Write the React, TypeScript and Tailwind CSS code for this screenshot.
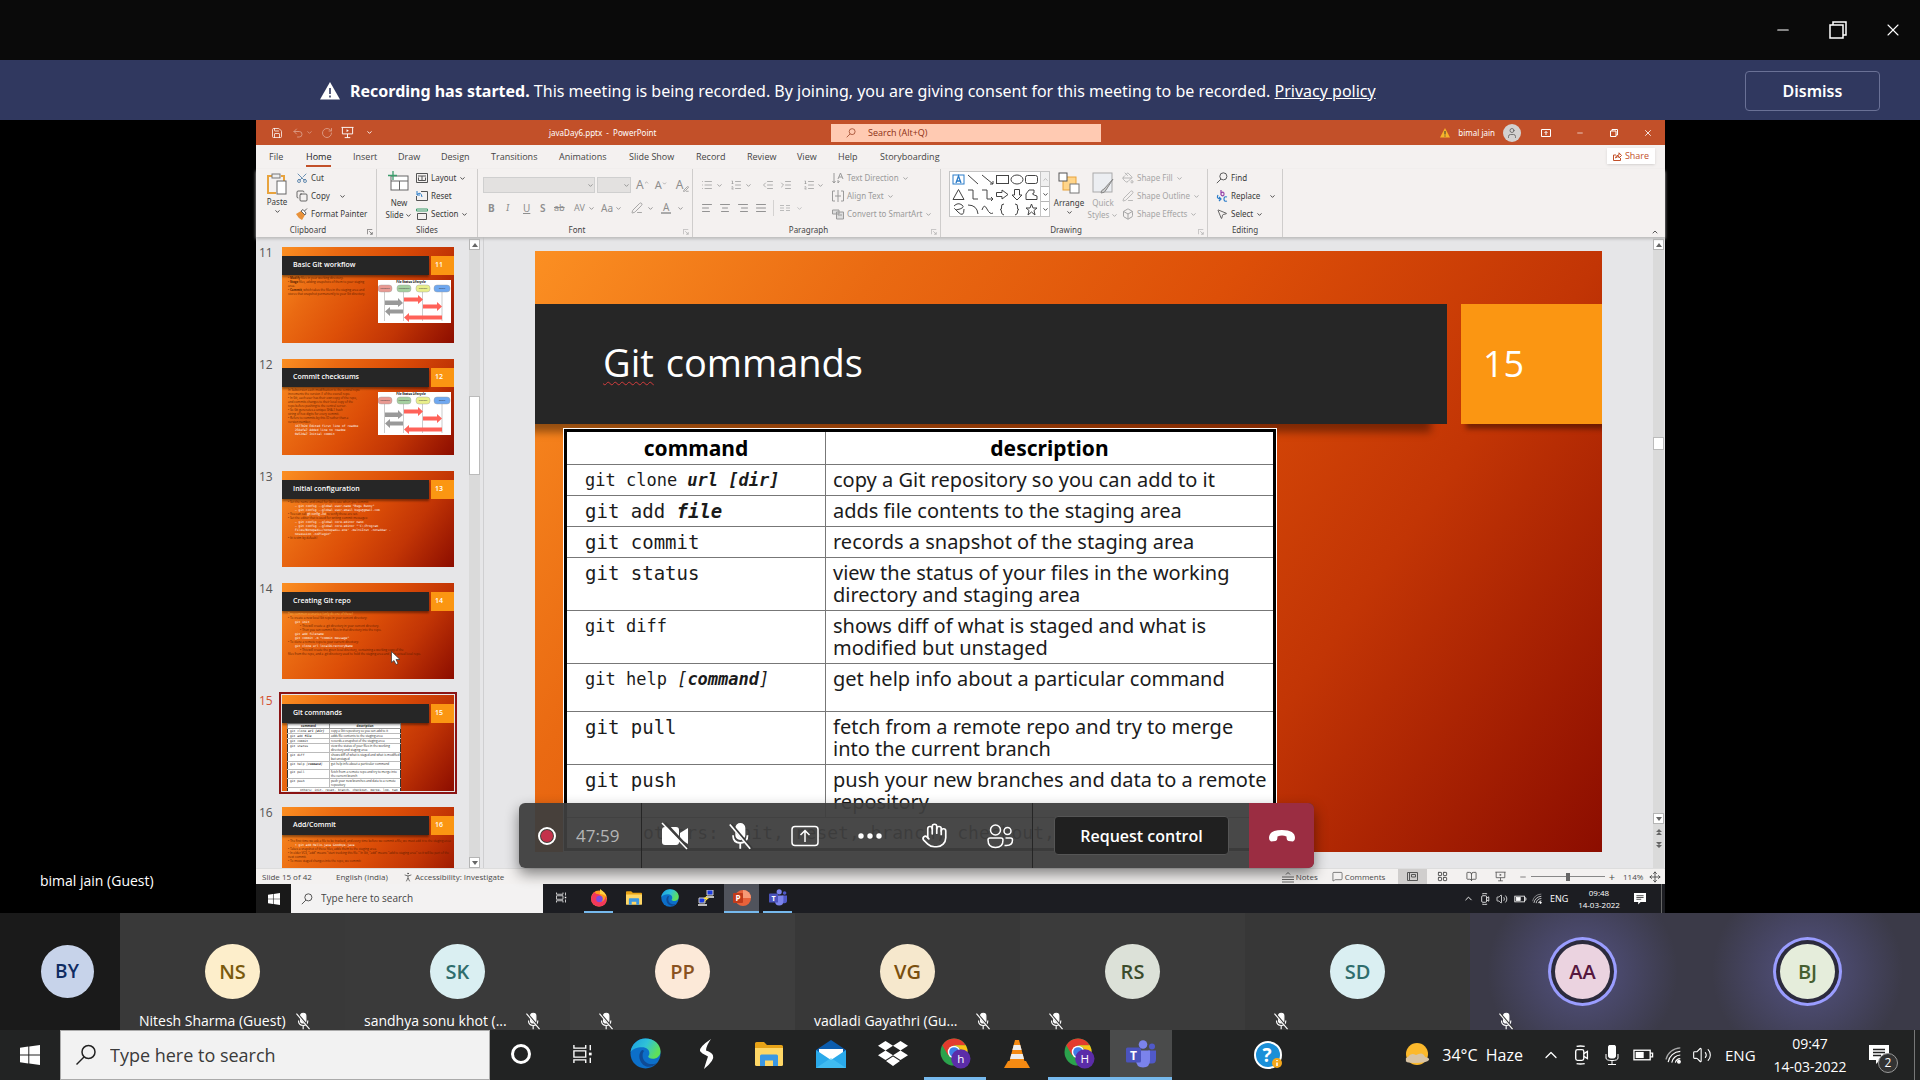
import React from 'react';
import {
  Save, Undo2, RotateCw, Scissors, Copy, List, ListOrdered, IndentDecrease, IndentIncrease,
  TextAlignStart, TextAlignCenter, TextAlignEnd, TextAlignJustify, ChevronDown, ChevronUp, Search, MousePointer2, PaintBucket,
  PenLine, Box, Minus, X, User, BookOpen, LayoutGrid, MessageSquare, Volume2, Hand, PersonStanding, Move,
} from 'lucide-react';

type P = { className?: string };

const Chev = ({ className = '' }: P) => <ChevronDown className={'size-[7px] shrink-0 ' + className} strokeWidth={3} />;

const WinLogo = ({ className = '' }: P) => (
  <svg viewBox="0 0 20 20" className={className} fill="#fff">
    <path d="M0 2.8 8.3 1.6V9.5H0ZM9.3 1.5 20 0V9.5H9.3ZM0 10.5H8.3V18.4L0 17.2ZM9.3 10.5H20V20L9.3 18.5Z" />
  </svg>
);
const Lens = ({ className = '' }: P) => (
  <svg viewBox="0 0 22 22" className={className} fill="none" stroke="currentColor" strokeWidth="1.500"><circle cx="13.500" cy="8" r="6.500" /><path d="M9 13 1.500 20.500" /></svg>
);
const Screen = ({ className = '' }: P) => (
  <svg viewBox="0 0 14 14" className={className} fill="none" stroke="currentColor"><path d="M.5 1.500H13.500M1.500 1.500V8.500H12.500V1.500M7 8.500V12.500M4 12.500H10" /><path d="M6 3.500V6.500L8.500 5Z" fill="currentColor" stroke="none" /></svg>
);
const Edge = ({ className = '' }: P) => (
  <svg viewBox="0 0 32 32" className={className}>
    <defs>
      <linearGradient id="edgeTop" x1="0" y1="0" x2="1" y2=".4"><stop offset="0" stopColor="#1b9de2" /><stop offset=".55" stopColor="#2fc2d8" /><stop offset="1" stopColor="#5fe05a" /></linearGradient>
    </defs>
    <circle cx="16" cy="16" r="15.500" fill="#0c6fc9" />
    <path d="M.6 14.500C1.600 6.500 8 .5 16 .5c9 0 15.500 6.200 15.500 13.200 0 5-3.700 7.800-8 7.800-3 0-4.700-1.300-4.700-2.300 0-.8 1.200-1.200 1.200-3.500C20 12 17 9.500 12.500 9.500 7 9.500 2.500 11.500.6 14.500Z" fill="url(#edgeTop)" />
    <path d="M12.500 12.500c-4 3-4 10.500 1 15 3.500 3 9.500 3 14-1.500-9 3-14.500-2-14.500-8 0-2 .6-3.500 1.600-4.500-.6-.7-1.400-1-2.100-1Z" fill="#0f4a94" />
  </svg>
);
const Folder = ({ className = '' }: P) => (
  <svg viewBox="0 0 28 24" className={className}>
    <path d="M0 1.500Q0 0 1.500 0H9l3 3H26.500Q28 3 28 4.500V8H0Z" fill="#e8a317" />
    <path d="M0 6H28V22.500Q28 24 26.500 24H1.500Q0 24 0 22.500Z" fill="#ffd766" />
    <path d="M5 24V14Q5 12.500 6.500 12.500H21.500Q23 12.500 23 14V24H18V18.500H10V24Z" fill="#3b97e3" />
  </svg>
);
const TeamsLogo = ({ className = '' }: P) => (
  <svg viewBox="0 0 30 28" className={className}>
    <circle cx="17" cy="4.500" r="4.300" fill="#7b83eb" /><circle cx="26" cy="6.500" r="3" fill="#5059c9" />
    <path d="M22 10.500H30V19q0 4.500-4 4.500h-4Z" fill="#5059c9" />
    <path d="M10 10.500H24V20q0 7.500-7 7.500T10 20Z" fill="#7b83eb" />
    <rect y="7.500" width="15" height="15" rx="1.500" fill="#4b53bc" />
    <text x="7.500" y="19.500" fontSize="12" fontWeight="700" textAnchor="middle" fill="#fff" fontFamily="Open Sans, sans-serif">T</text>
  </svg>
);
const Chrome = ({ letter, className = '' }: P & { letter: string }) => (
  <svg viewBox="0 0 32 32" className={className}>
    <circle cx="14.500" cy="14.500" r="14" fill="#2ba24c" />
    <path d="M2.400 7.500 8.500 18 14.500 14 14.500 7.500 26.600 7.500 A14 14 0 0 0 2.400 7.500Z" fill="#e33b2e" />
    <path d="M26.600 7.500A14 14 0 0 1 14.500 28.500L20.500 18 20 10 14.500 7.500Z" fill="#fbc116" />
    <circle cx="14.500" cy="14.500" r="6.500" fill="#fff" /><circle cx="14.500" cy="14.500" r="5" fill="#3e7fe8" />
    <circle cx="21.500" cy="21.500" r="10" fill="#5b2ca8" />
    <text x="21.500" y="26" fontSize="12" textAnchor="middle" fill="#fff" fontFamily="Open Sans, sans-serif">{letter}</text>
  </svg>
);
const TaskView = ({ className = '' }: P) => (
  <svg viewBox="0 0 22 22" className={className} fill="none" stroke="#fff" strokeWidth="1.500">
    <path d="M1 1V4.500H14V1M1 21V17.500H14V21M1 7.500H14V14.500H1ZM19 1V7M19 15V21" /><path d="M19 9.500V12.500" strokeWidth="3" />
  </svg>
);
const MicOff = ({ className = '' }: P) => (
  <svg viewBox="0 0 20 22" className={className} fill="none" stroke="#fff" strokeWidth="1.400">
    <rect x="7" y="1.500" width="6.500" height="12" rx="3.200" fill="#fff" />
    <path d="M4.500 10.500q0 6 5.700 6t5.700-6M10.200 16.500V21" />
    <path d="M3 2 19 21" stroke="#3a3a3a" strokeWidth="2.500" /><path d="M2 2 18 21" />
  </svg>
);
const CamTray = ({ className = '' }: P) => (
  <svg viewBox="0 0 20 22" className={className} fill="none" stroke="#fff" strokeWidth="1.500">
    <rect x="3" y="5" width="9" height="12" rx="2" /><path d="M12 9.500 16 7V15L12 12.500M4 1.500Q8 .5 13 1.500M4 20.500Q8 21.500 13 20.500" />
  </svg>
);
const Wifi = ({ className = '' }: P) => (
  <svg viewBox="0 0 20 20" className={className} fill="none" stroke="#fff" strokeWidth="1.300">
    <path d="M1 15A17 17 0 0 1 17 2" opacity=".6" /><path d="M3.500 18A14 14 0 0 1 17 6M7.500 18.500A10 10 0 0 1 17 10M11.500 18.500A6 6 0 0 1 17 14" /><circle cx="15.500" cy="17.500" r="1.500" fill="#fff" />
  </svg>
);
const Battery = ({ className = '' }: P) => (
  <svg viewBox="0 0 22 14" className={className} fill="none" stroke="#fff" strokeWidth="1.400">
    <rect x="1" y="2" width="17" height="10" /><path d="M18 5H20.500V9H18" /><rect x="3.500" y="4.500" width="7" height="5" fill="#fff" />
  </svg>
);
const Notice = ({ className = '' }: P) => (
  <svg viewBox="0 0 20 20" className={className}><path d="M0 0H20V15H11L7 19V15H0Z" fill="#fff" /><path d="M4 4.500H16M4 7.500H16M4 10.500H12" stroke="#222" strokeWidth="1.300" /></svg>
);
const Launcher = () => (
  <svg viewBox="0 0 8 8" className="absolute right-[3px] bottom-[2px] size-[6px]" fill="none" stroke="currentColor" strokeWidth=".9"><path d="M.5 7V.5H7M3 3 7 7M7 4V7H4" /></svg>
);

/* ---------- Ribbon ---------- */
const Group = ({ label, className, children, launcher = true, dim = false }: { label: string; className: string; children: React.ReactNode; launcher?: boolean; dim?: boolean }) => (
  <section className={'relative flex h-[68px] shrink-0 flex-col border-r border-[#cfcdcc] ' + className}>
    <div className="flex h-14 min-w-0">{children}</div>
    <div className={'text-center leading-[14px] text-[#444] ' + (launcher ? 'pr-4' : '')}>{label}</div>
    {launcher && <span className={dim ? 'text-[#aaa]' : 'text-[#555]'}><Launcher /></span>}
  </section>
);
const Item = ({ icon, text, chev, wide }: { icon: React.ReactNode; text: string; chev?: boolean; wide?: boolean }) => (
  <button className="flex h-[18px] items-center gap-[3px] whitespace-nowrap leading-[18px]">
    <span className="flex w-3 justify-center">{icon}</span>{text}{chev && <Chev className={wide ? 'ml-[6px]' : ''} />}
  </button>
);
const I = 'size-3';
const Bar = () => <span className="h-4 w-px bg-[#d4d2d1]" />;

const Ribbon = () => (
  <div className="relative z-10 flex bg-[#f4f1f0] font-['Noto_Sans',sans-serif] text-[8px] text-[#3a3a3a] shadow-[0_2px_3px_#bbb]">
    <Group label="Clipboard" className="w-[121px]">
      <button className="ml-2 flex w-[26px] flex-col items-center pt-[3px]">
        <svg viewBox="0 0 20 24" className="h-6 w-5" fill="none"><path d="M5 4H1V21H9M14 4H17V9" stroke="#e8a33d" strokeWidth="2" /><rect x="5" y="2" width="8" height="4" fill="#eee" stroke="#777" /><rect x="10" y="9" width="9" height="13" fill="#fff" stroke="#666" /></svg>
        <span className="leading-3">Paste</span><Chev />
      </button>
      <div className="ml-[6px] flex flex-col">
        <Item icon={<Scissors className={I + ' -rotate-90 text-[#3c6f9f]'} strokeWidth={1.500} />} text="Cut" />
        <Item icon={<Copy className={I} strokeWidth={1.500} />} text="Copy" chev wide />
        <Item icon={<svg viewBox="0 0 12 12" className={I}><path d="M0 6 5 3 9 7 6 12Q2 10 0 6Z" fill="#e8923a" /><path d="M5 3 7 1.500 10 5 9 7ZM8.500 3 11 .5" fill="#fff" stroke="#555" strokeWidth=".9" /></svg>} text="Format Painter" />
      </div>
    </Group>
    <Group label="Slides" className="w-[101px]" launcher={false}>
      <button className="ml-[7px] flex w-[30px] flex-col items-center pt-[2px]">
        <svg viewBox="0 0 22 22" className="size-[22px]" fill="none"><rect x="3" y="5" width="17" height="14" fill="#fff" stroke="#666" /><path d="M3 10H20M11.500 10V19" stroke="#666" /><path d="M5 0V9M0 4.500H9" stroke="#3b9c6b" strokeWidth="1.300" /></svg>
        <span className="mt-1 leading-3">New</span><span className="flex items-center gap-[2px] leading-3">Slide<Chev /></span>
      </button>
      <div className="ml-[2px] flex flex-col">
        <Item icon={<svg viewBox="0 0 12 12" className={I} fill="none" stroke="#555"><path d="M.5 1.500H11.500V10.500H.5ZM2 4H10M6 4V9M2.500 5.500V8.500H9.500V5.500" /></svg>} text="Layout" chev />
        <Item icon={<svg viewBox="0 0 12 12" className={I} fill="none" stroke="#555"><path d="M5 1.500H11.500V10.500H.5V6" /><path d="M1 4.500Q5 1 6 7M1 1V5H4" stroke="#2b7cc9" /></svg>} text="Reset" />
        <Item icon={<svg viewBox="0 0 12 12" className={I} fill="none" stroke="#555"><path d="M.5 1H11.500V3H.5Z" stroke="#3b9c6b" /><path d="M1.500 5.500H10.500V11.500H1.500Z" /></svg>} text="Section" chev />
      </div>
    </Group>
    <Group label="Font" className="w-[215px] text-[#8e8e8e]" dim>
      <div className="flex flex-col pl-[5px]">
        <div className="flex h-[30px] items-center gap-[2px] pt-[2px]">
          <span className="flex h-4 w-[112px] items-center justify-end border border-[#cfcfcf] bg-[#e3e1e0]"><Chev /></span>
          <span className="flex h-4 w-[34px] items-center justify-end border border-[#cfcfcf] bg-[#e3e1e0]"><Chev /></span>
          <button className="ml-[3px] flex text-[12px]">A<ChevronUp className="mt-1 size-[5px]" strokeWidth={3} /></button><button className="ml-[4px] flex text-[11px]">A<ChevronDown className="mt-1 size-[5px]" strokeWidth={3} /></button>
          <span className="ml-[2px]"><Bar /></span><button className="ml-[3px] flex items-end text-[12px]">A<PenLine className="mb-[2px] size-[6px]" strokeWidth={3} /></button>
        </div>
        <div className="flex h-[18px] items-center pl-[5px] text-[10px]">
          <b className="w-[18px]">B</b><i className="w-[17px] font-serif">I</i><u className="w-[17px]">U</u><span className="w-[14px] font-semibold">S</span><s className="w-[20px] text-[9px]">ab</s>
          <span className="w-[14px] text-[9px]">AV</span><Chev /><span className="ml-[6px] w-[14px]">Aa</span><Chev />
          <span className="ml-[4px]"><Bar /></span><PenLine className="ml-[5px] size-3" strokeWidth={1.500} /><Chev className="ml-1" /><span className="ml-[7px] border-b-2 border-[#aaa] px-[2px] leading-[10px]">A</span><Chev className="ml-[6px]" />
        </div>
      </div>
    </Group>
    <Group label="Paragraph" className="w-[248px] text-[#9a9a9a]" dim>
      <div className="flex w-[139px] shrink-0 flex-col pl-2">
        <div className="flex h-[30px] items-center pt-[2px]">
          <List className={I} strokeWidth={1.500} /><Chev className="ml-[3px]" /><ListOrdered className="ml-[7px] size-3" strokeWidth={1.500} /><Chev className="ml-[3px]" />
          <span className="ml-1"><Bar /></span><IndentDecrease className="ml-[6px] size-3" strokeWidth={1.500} /><IndentIncrease className="ml-[6px] size-3" strokeWidth={1.500} />
          <span className="ml-[7px]"><Bar /></span><ListOrdered className="ml-[4px] size-3" strokeWidth={1.500} /><Chev className="ml-[2px]" />
        </div>
        <div className="flex h-[18px] items-center gap-[6px] text-[#888]">
          <TextAlignStart className={I} strokeWidth={1.800} /><TextAlignCenter className={I} strokeWidth={1.800} /><TextAlignEnd className={I} strokeWidth={1.800} /><TextAlignJustify className={I} strokeWidth={1.800} />
          <Bar /><svg viewBox="0 0 10 8" className="h-2 w-[10px]" stroke="#bbb"><path d="M0 1.500H4M6 1.500H10M0 4H4M6 4H10M0 6.500H4M6 6.500H10" /></svg><Chev className="text-[#bbb]" />
        </div>
      </div>
      <div className="flex flex-col">
        <Item icon={<svg viewBox="0 0 12 12" className={I} fill="none" stroke="currentColor"><path d="M2 1V11M.5 9 2 11 3.500 9M6 11V8M6 11 7.500 9M6 7 8.500 1 11 7M7 5H10" /></svg>} text="Text Direction" chev />
        <Item icon={<svg viewBox="0 0 12 12" className={I} fill="none" stroke="currentColor"><path d="M3 1H.5V11H3M9 1H11.500V11H9M6 0V12M3 6H9" /></svg>} text="Align Text" chev />
        <Item icon={<svg viewBox="0 0 12 12" className={I} fill="#ddd" stroke="currentColor"><path d="M.5 2H7V6H.5ZM4.500 4H11.500V11H4.500ZM6 7H10" /></svg>} text="Convert to SmartArt" chev />
      </div>
    </Group>
    <Group label="Drawing" className="w-[267px]" dim>
      <div className="mt-[2px] ml-2 flex h-[46px] w-[101px] shrink-0 border border-[#c4c4c4] bg-white">
        <svg viewBox="0 0 90 44" className="h-[44px] w-[90px]" fill="none" stroke="#444" strokeWidth="1">
          <rect x="3" y="3" width="11" height="9" stroke="#2b7cc9" /><path d="M6 11 8.500 4 11 11M7 9H10" stroke="#2b7cc9" strokeWidth="1.300" />
          <path d="M18 3 28 12M32 3 43 12M43 9V12H40" /><rect x="46.500" y="3.500" width="12" height="8" /><ellipse cx="67" cy="7.500" rx="6" ry="4.500" /><rect x="75.500" y="3.500" width="12" height="8" rx="2" />
          <path d="M8.500 17.500 14 27.500H3ZM18 18H23V27H28M32 18H37V27H43M41 25 43 27 41 29M46.500 20.500H52V18L58 22.500 52 27V24.500H46.500ZM64.500 17.500H69.500V23H72L67 28 62 23H64.500ZM76 27.500V22L79 18H84V21Q80 22 87 24V27.500Z" />
          <path d="M4 34Q8 30 12 33T6 38Q2 34 8 40T14 37M18 33Q27 33 28 42M32 38Q34 31 37 37T43 41M54 32Q51 32 51.500 35T50 37.500Q52 38 51.500 40T54 43M65 32Q68 32 67.500 35T69 37.500Q67 38 67.500 40T65 43M81.500 32 83 36H87L84 38.500 85 43 81.500 40 78 43 79 38.500 76 36H80Z" />
        </svg>
        <div className="flex flex-1 flex-col divide-y divide-[#b5b5b5] border-l border-[#c4c4c4]">
          <span className="grid flex-1 place-items-center bg-[#f0f0f0] text-[#999]"><ChevronUp className="size-[7px]" /></span><span className="grid flex-1 place-items-center"><Chev /></span><span className="grid flex-1 place-items-center"><Chev /></span>
        </div>
      </div>
      <button className="ml-[2px] flex w-[34px] flex-col items-center pt-[3px]">
        <svg viewBox="0 0 22 22" className="size-[22px]"><rect x="5" y="5" width="13" height="13" fill="#ffd58a" stroke="#e8a33d" /><rect x="1" y="1" width="8" height="8" fill="#fff" stroke="#555" /><rect x="12" y="12" width="9" height="9" fill="#fff" stroke="#777" /></svg>
        <span className="mt-[3px] leading-3">Arrange</span><Chev />
      </button>
      <button className="flex w-[34px] flex-col items-center pt-[3px] text-[#a5a5a5]">
        <svg viewBox="0 0 22 22" className="size-[22px]" fill="none"><rect x="1" y="1" width="19" height="19" fill="#eceef2" stroke="#aaa" /><path d="M21 7 12 17Q9 18 9 21 13 21 14 18Z" fill="#ccc" stroke="#888" /></svg>
        <span className="mt-[3px] leading-3">Quick</span><span className="flex items-center gap-[2px] leading-3">Styles<Chev /></span>
      </button>
      <div className="ml-[2px] flex flex-col text-[#a5a5a5]">
        <Item icon={<PaintBucket className={I} strokeWidth={1.500} />} text="Shape Fill" chev />
        <Item icon={<PenLine className={I} strokeWidth={1.500} />} text="Shape Outline" chev />
        <Item icon={<Box className={I} strokeWidth={2} />} text="Shape Effects" chev />
      </div>
    </Group>
    <Group label="Editing" className="w-[75px]" launcher={false}>
      <div className="flex flex-col pl-2">
        <Item icon={<Lens className={I} />} text="Find" />
        <Item icon={<svg viewBox="0 0 12 12" className={I} fill="none" strokeWidth="1.200"><path d="M5 0V5M5 3Q8 1 8 4T5 5" stroke="#9440a8" /><path d="M2 5Q0 9 5 9M3 7 5 9 3 11M11 7Q8 6 8 9T11 11" stroke="#2b7cc9" /></svg>} text="Replace" chev wide />
        <Item icon={<MousePointer2 className={I} strokeWidth={1.500} />} text="Select" chev />
      </div>
    </Group>
    <ChevronUp className="mt-auto mr-[6px] mb-[1px] ml-auto size-2" strokeWidth={2.500} />
  </div>
);

/* ---------- Slides ---------- */
const Diagram = () => (
  <svg viewBox="0 0 73 43" className="h-[43px] w-[73px] bg-white">
    <text x="33" y="3" fontSize="3" fontWeight="700" textAnchor="middle">File Status Lifecycle</text>
    <path d="M6.500 12V41M25.500 12V41M44.500 12V41M64 12V41" stroke="#aaa" strokeWidth=".6" />
    <rect x="0" y="5" width="14" height="7" rx="3" fill="#e99a93" stroke="#999" strokeWidth=".4" /><rect x="19" y="5" width="14" height="7" rx="3" fill="#a5d0a0" stroke="#999" strokeWidth=".4" />
    <rect x="38" y="5" width="14" height="7" rx="3" fill="#e9ef8b" stroke="#999" strokeWidth=".4" /><rect x="56" y="5" width="16" height="7" rx="3" fill="#6fa8f0" stroke="#999" strokeWidth=".4" />
    <g fill="#ff6259"><path d="M26 17.500H40V15L45 19.500 40 24V21.500H26ZM45 24.500H59V22L64 26.500 59 31V28.500H45ZM64 35.500H31V33L26 37.500 31 42V39.500H64Z" /></g>
    <g fill="#999"><path d="M7 20.500H20V18L25 23 20 27V25H7ZM25 29.500H12V27L7 31.500 12 36V33.500H25Z" /></g>
    <g fontSize="2" textAnchor="middle" fill="#333"><text x="7" y="9">untracked</text><text x="26" y="9">unmodified</text><text x="45" y="9">modified</text><text x="64" y="9">staged</text></g>
  </svg>
);

const rows: [React.ReactNode, string, string, string][] = [
  [<>git clone <b><i>url [dir]</i></b></>, 'copy a Git repository so you can add to it', 'h-[31px] text-[17px]', 'h-[5px]'],
  [<>git add <b><i>file</i></b></>, 'adds file contents to the staging area', 'h-[31px] text-[19px]', 'h-[5px]'],
  ['git commit', 'records a snapshot of the staging area', 'h-[31px] text-[19px]', 'h-[5px]'],
  ['git status', 'view the status of your files in the working directory and staging area', 'h-[53px] text-[19px]', 'h-[9px]'],
  ['git diff', 'shows diff of what is staged and what is modified but unstaged', 'h-[53px] text-[17px]', 'h-[8px]'],
  [<>git help <i>[<b>command</b>]</i></>, 'get help info about a particular command', 'h-[48px] text-[17px]', 'h-[8px]'],
  ['git pull', 'fetch from a remote repo and try to merge into the current branch', 'h-[53px] text-[19px]', 'h-[9px]'],
  ['git push', 'push your new branches and data to a remote repository', 'h-[53px] text-[19px]', 'h-[8px]'],
];

const CommandTable = () => (
  <table className="w-[712px] table-fixed border-collapse border-[3px] border-black bg-white text-[20px] leading-[22px] text-[#1b1b1b] outline-1 outline-white">
    <colgroup><col className="w-[260px]" /><col /></colgroup>
    <thead><tr className="h-[34px] text-[21px] text-black"><th className="border border-[#777]">command</th><th className="border border-[#777]">description</th></tr></thead>
    <tbody>
      {rows.map(([c, d, cls], i) => (
        <tr key={i} className={cls}>
          <td className="border border-[#777] pt-[4px] pl-[18px] align-top font-['DejaVu_Sans_Mono',monospace] whitespace-nowrap">{c}</td>
          <td className="border border-[#777] pt-[4px] pl-[7px] align-top text-[20px]">{d}</td>
        </tr>
      ))}
      <tr className="h-[32px]"><td colSpan={2} className="border border-[#777] pl-[76px] font-['DejaVu_Sans_Mono',monospace] text-[18px] whitespace-nowrap">others: init, reset, branch, checkout, merge, log, tag</td></tr>
    </tbody>
  </table>
);

const MiniTable = () => (
  <table className="ml-[5px] w-[114px] table-fixed border-collapse border border-[#333] bg-white text-[3px] leading-[4px] text-[#222]">
    <colgroup><col className="w-[42px]" /><col /></colgroup>
    <thead><tr className="h-[5px]"><th className="border border-[#999]">command</th><th className="border border-[#999]">description</th></tr></thead>
    <tbody>
      {rows.map(([c, d, , h], i) => <tr key={i} className={h}><td className="border-r border-b border-[#bbb] pl-[2px] align-top font-['DejaVu_Sans_Mono',monospace]">{c}</td><td className="border-b border-[#bbb] pl-px align-top">{d}</td></tr>)}
      <tr className="h-[4px]"><td colSpan={2} className="pl-3 font-['DejaVu_Sans_Mono',monospace] whitespace-nowrap">others: init, reset, branch, checkout, merge, log, tag</td></tr>
    </tbody>
  </table>
);

const W = ({ children }: { children: React.ReactNode }) => <div className="pl-[7px] font-['DejaVu_Sans_Mono',monospace] text-white">{children}</div>;
const thumbs: { n: number; title: string; body: React.ReactNode; pic?: boolean }[] = [
  { n: 11, title: 'Basic Git workflow', pic: true, body: <div className="w-[82px]"><p>• <b>Modify</b> files in your working directory.</p><p>• <b>Stage</b> files, adding snapshots of them to your staging area.</p><p>• <b>Commit</b>, which takes the files in the staging area and stores that snapshot permanently to your Git directory.</p></div> },
  { n: 12, title: 'Commit checksums', pic: true, body: <div className="w-[80px] whitespace-nowrap"><p>In Subversion each modification to the central repo</p><p>increments the version # of the overall repo.</p><p>• In Git, each user has their own copy of the repo,</p><p>and commits changes to their local copy of the</p><p>repo before pushing to the central server.</p><p>• So Git generates a unique SHA-1 hash</p><p>string of hex digits for every commit.</p><p>• Refers to commits by this ID rather than a</p><p>version number.</p><W>1677b2d Edited first line of readme</W><W>258efa7 Added line to readme</W><W>0e52da7 Initial commit</W></div> },
  { n: 13, title: 'Initial configuration', body: <div className="w-[116px]"><p>• Set the name and email for Git to use when you commit:</p><W>– git config --global user.name "Bugs Bunny"</W><W>– git config --global user.email bugs@gmail.com</W><p>• You can call <span className="text-white">git config –list</span> to verify these are set.</p><p>• Set the editor that is used for writing commit messages:</p><W>– git config --global core.editor nano</W><W>– git config --global core.editor "'C:/Program Files/Notepad++/notepad++.exe' -multiInst -notabbar -nosession -noPlugin"</W><p>• (it is vim by default)</p></div> },
  { n: 14, title: 'Creating Git repo', body: <div><p className="text-[#f5b04a]">Two common scenarios: (only do one of these)</p><p>• To create a new local Git repo in your current directory:</p><W>git init</W><p className="pl-3">• This will create a .git directory in your current directory.</p><p className="pl-3">• Then you can commit files in that directory into the repo.</p><W>git add filename</W><W>git commit -m "commit message"</W><p>• To clone a remote repo to your current directory:</p><W>git clone url localDirectoryName</W><p className="pl-3">• This will create the given local directory, containing a working copy of the</p><p>files from the repo, and a .git directory used to hold the staging area and your actual local repo.</p></div> },
  { n: 15, title: 'Git commands', body: null },
  { n: 16, title: 'Add/Commit', body: <div className="pt-[3px]"><p>• The first time we ask a file to be tracked, and every time before we commit a file, we must add it to the staging area:</p><W>• git add Hello.java Goodbye.java</W><p>• Takes a snapshot of these files, adds them to the staging area.</p><p>• In older VCS, "add" means "start tracking this file." In Git, "add" means "add to staging area" so it will be part of the next commit.</p><p>• To move staged changes into the repo, we commit:</p></div> },
];

const slideBg = 'bg-[linear-gradient(125deg,#fb8f22_0%,#ea6a12_24%,#dd4f08_48%,#c23505_72%,#8c0d00_100%)]';

const Thumb = ({ t }: { t: (typeof thumbs)[number] }) => {
  const on = t.n === 15;
  return (
    <li className="flex h-24 shrink-0">
      <span className={'w-[26px] pl-[3px] text-[12px] leading-3 ' + (on ? 'text-[#d35230]' : 'text-[#555]')}>{t.n}</span>
      <div className={'relative h-24 w-[172px] overflow-hidden pt-[9px] ' + slideBg + (on ? ' outline-2 outline-offset-1 outline-[#8b1414]' : '')}>
        <div className="flex h-[19px] gap-[2px] text-[7px] leading-[18px] font-semibold text-white">
          <div className="w-[147px] bg-[#262626] pl-[11px] shadow-[0_2px_2px_#0006]">{t.title}</div>
          <div className="flex-1 bg-[#fb9612] pl-1">{t.n}</div>
        </div>
        {on ? <MiniTable /> : <div className="flex pt-px pl-[6px] text-[3px] leading-[4px] text-[#5c1c00]">{t.body}{t.pic && <div className="absolute top-[33px] right-[3px]"><Diagram /></div>}</div>}
        {t.n === 14 && <svg viewBox="0 0 10 14" className="absolute top-[68px] left-[109px] h-[14px] w-[10px]"><path d="M.5.5V11.500L3 9.500 5 13.500 7 12.500 5 8.500H9Z" fill="#fff" stroke="#333" strokeWidth=".7" /></svg>}
      </div>
    </li>
  );
};

const Arrow = ({ down = false }: { down?: boolean }) => (
  <span className="grid h-[11px] shrink-0 place-items-center border border-[#b5b5b5] bg-white"><svg viewBox="0 0 6 4" className={'h-1 w-[6px] ' + (down ? 'rotate-180' : '')}><path d="M0 4 3 0 6 4Z" fill="#666" /></svg></span>
);

const TitleBar = () => (
  <div className="flex h-[25px] shrink-0 items-center bg-[#c25029] text-[9px] text-white">
    <div className="flex w-[293px] items-center pl-[15px]">
      <Save className="size-3" strokeWidth={1.500} /><Undo2 className="ml-[9px] size-3 opacity-40" /><Chev className="ml-[2px] opacity-40" /><RotateCw className="ml-[8px] size-3 opacity-40" /><Screen className="ml-[8px] size-[13px]" /><Chev className="ml-[12px]" />
    </div>
    <span className="w-[282px] font-['Noto_Sans',sans-serif] text-[8px]">javaDay6.pptx&nbsp; -&nbsp; PowerPoint</span>
    <label className="flex h-[18px] w-[270px] items-center bg-[#ffcab2] pl-[15px] text-[#8d2f12]">
      <Lens className="mr-3 size-[10px]" />
      <input aria-label="Search" placeholder="Search (Alt+Q)" className="flex-1 bg-transparent outline-none placeholder:text-[#8d2f12]" />
    </label>
    <div className="ml-auto flex items-center">
      <svg viewBox="0 0 10 10" className="size-[10px]"><path d="M5 0 10 9.500H0Z" fill="#f7b32b" /><path d="M5 3V6.500M5 7.500V8.500" stroke="#333" /></svg>
      <span className="ml-[8px] font-['Noto_Sans',sans-serif] text-[8px]">bimal jain</span>
      <span className="ml-[8px] grid size-[18px] place-items-center rounded-full bg-[#d3d1d0] text-[#555]"><User className="size-3" strokeWidth={1.500} /></span>
      <svg viewBox="0 0 10 8" className="ml-[20px] h-2 w-[10px]" fill="none" stroke="#fff"><path d="M.5.5H9.500V7.500H.5ZM5 6V2.500M3.500 4 5 2.500 6.500 4" /></svg>
      <button aria-label="Minimise" className="ml-[25px]"><Minus className="size-2" /></button>
      <button aria-label="Restore" className="ml-[26px]"><svg viewBox="0 0 8 8" className="size-2" fill="none" stroke="#fff"><path d="M.5 2H6V7.500H.5ZM2 2V.5H7.500V6H6" /></svg></button>
      <button aria-label="Close" className="mr-[12px] ml-[25px]"><X className="size-[10px]" /></button>
    </div>
  </div>
);

const tabs: [string, string][] = [
  ['File', 'w-[37px]'], ['Home', 'w-[47px]'], ['Insert', 'w-[45px]'], ['Draw', 'w-[43px]'], ['Design', 'w-[50px]'], ['Transitions', 'w-[68px]'], ['Animations', 'w-[70px]'],
  ['Slide Show', 'w-[67px]'], ['Record', 'w-[51px]'], ['Review', 'w-[50px]'], ['View', 'w-[41px]'], ['Help', 'w-[42px]'], ['Storyboarding', 'w-[70px]'],
];

const StatusBar = () => (
  <div className="flex h-4 shrink-0 items-center border-t border-[#ddd] bg-[#f3f1f0] text-[8px] text-[#4a4a4a]">
    <span className="w-[80px] pl-[6px]">Slide 15 of 42</span><span className="w-[66px]">English (India)</span><PersonStanding className="mr-px size-3" strokeWidth={1.500} /><span>Accessibility: Investigate</span>
    <div className="ml-auto flex items-center">
      <svg viewBox="0 0 12 12" className="mr-[2px] size-3" stroke="#666" fill="none"><path d="M0 6H12M0 8.500H12M0 11H12M4 3.500 6 1.500 8 3.500" /></svg><span className="w-[36px]">Notes</span>
      <MessageSquare className="mr-[2px] size-[11px]" strokeWidth={1.500} /><span className="w-[53px]">Comments</span>
      <span className="grid h-4 w-[29px] place-items-center bg-[#d0cecd]"><svg viewBox="0 0 11 9" className="h-[9px] w-[11px]" fill="none" stroke="#555"><path d="M.5.5H10.500V8.500H.5ZM2.500.5V8.500M4.500 2.500H8.500V5H4.500Z" /></svg></span>
      <LayoutGrid className="ml-[10px] size-[11px]" /><BookOpen className="ml-[18px] size-[11px]" strokeWidth={1.800} /><Screen className="ml-[18px] size-[11px]" />
      <Minus className="ml-[13px] size-2" /><span className="mx-1 flex h-px w-[74px] items-center justify-center bg-[#888]"><span className="h-2 w-1 bg-[#666]" /></span><span className="text-[11px] leading-3">+</span>
      <span className="ml-[8px] w-[26px]">114%</span><Move className="mr-1 size-3" strokeWidth={1.800} />
    </div>
  </div>
);

const tile = 'flex h-[29px] items-center justify-center border-b-2 ';
const InnerTaskbar = () => (
  <div className="flex h-[29px] shrink-0 items-center bg-[#1c1d22] text-white">
    <button aria-label="Start" className="grid h-full w-[35px] place-items-center bg-[#191919]"><WinLogo className="size-3" /></button>
    <label className="flex h-full w-[252px] items-center bg-[#f3f2f2] pl-[10px] text-[#333]"><Lens className="mr-[8px] size-3" /><input aria-label="Type here to search" placeholder="Type here to search" className="w-[180px] text-[10px] outline-none placeholder:text-[#444]" /></label>
    <div className={tile + 'w-9 border-transparent'}><TaskView className="size-[11px]" /></div>
    <div className={tile + 'ml-[5px] w-[29px] border-[#76b9ed]'}>
      <svg viewBox="0 0 18 18" className="size-[18px]"><circle cx="9" cy="9.500" r="8" fill="#ff9a1f" /><path d="M9 17.500A8 8 0 0 1 1 9.500Q2 4 5 3 5 5 8 5 12 6 12 9.500T9 13 Q14 14 16 7 18 17 9 17.500Z" fill="#f2375b" /><circle cx="9.500" cy="10" r="3.300" fill="#7a4ae0" /><path d="M10 0Q15 3 16.500 8 14 5 10 5Z" fill="#ffd23f" /></svg>
    </div>
    <div className={tile + 'ml-[6px] w-[30px] border-transparent'}><Folder className="h-[14px] w-4" /></div>
    <div className={tile + 'ml-[6px] w-[30px] border-transparent'}><Edge className="size-[18px]" /></div>
    <div className={tile + 'ml-[6px] w-[30px] border-transparent'}><svg viewBox="0 0 16 16" className="size-4"><path d="M9 0H15V5H9ZM1 8H7V13H1Z" fill="#1a3ae0" stroke="#ccc" /><path d="M8 6H16V8H8ZM0 14H9V16H0Z" fill="#bbb" /><path d="M10 5 5 9H8L5 13 11 8H8Z" fill="#ffe13a" /></svg></div>
    <div className={tile + 'ml-[3px] w-[35px] border-[#76b9ed] bg-[#50535c]'}>
      <svg viewBox="0 0 18 18" className="size-[18px]"><circle cx="10" cy="9" r="8" fill="#e8623a" /><path d="M10 1A8 8 0 0 1 18 9H10Z" fill="#f79a76" /><rect y="4" width="10" height="10" rx="1" fill="#c13b1b" /><text x="5" y="12" fontSize="8" fontWeight="700" textAnchor="middle" fill="#fff">P</text></svg>
    </div>
    <div className={tile + 'ml-1 w-[29px] border-[#76b9ed]'}><TeamsLogo className="h-[17px] w-[18px]" /></div>
    <div className="ml-auto flex h-full items-center text-[9px]">
      <ChevronUp className="size-[11px]" /><CamTray className="ml-[6px] h-3 w-[11px]" /><Volume2 className="ml-[5px] size-3" strokeWidth={1.500} /><Battery className="ml-[6px] h-2 w-[13px]" /><Wifi className="ml-[5px] size-[11px]" />
      <span className="ml-[7px] w-[26px]">ENG</span>
      <span className="w-[46px] text-center text-[8px] leading-3">09:48<br />14-03-2022</span>
      <Notice className="mr-[15px] ml-[12px] size-[12px]" /><span className="mr-[3px] h-full w-px bg-[#666]" />
    </div>
  </div>
);

/* ---------- Teams ---------- */
const tb = 'flex w-[65px] items-center justify-center';
const CallBar = () => (
  <div className="absolute bottom-[45px] left-[519px] z-20 flex h-[65px] w-[795px] overflow-hidden rounded-md bg-[#3e3e3e]/95 text-white shadow-[0_6px_14px_#0007]">
    <div className="flex w-[123px] items-center border-r border-[#252525] pl-[19px]">
      <span className="grid size-[18px] place-items-center rounded-full border-2 border-white"><span className="size-[12px] rounded-full bg-[#c4314b]" /></span>
      <span className="ml-5 text-[17px] text-[#b5b5b5]">47:59</span>
    </div>
    <button aria-label="Turn camera on" className={tb}><svg viewBox="0 0 28 28" className="size-[28px]"><rect x="1" y="5" width="17" height="18" rx="3" fill="#fff" /><path d="M19 11 27 6V22L19 17Z" fill="#fff" /><path d="M4 1 28 27" stroke="#3e3e3e" strokeWidth="3" /><path d="M1 1 26 27" stroke="#fff" strokeWidth="1.500" /></svg></button>
    <button aria-label="Unmute" className={tb}><MicOff className="h-7 w-[26px]" /></button>
    <button aria-label="Share content" className={tb}><svg viewBox="0 0 28 22" className="h-[22px] w-7" fill="none" stroke="#fff" strokeWidth="1.500"><rect x="1" y="1.500" width="26" height="19" rx="3" /><path d="M14 17V6M9.500 10 14 5.500 18.500 10" /></svg></button>
    <button aria-label="More actions" className={tb}><svg viewBox="0 0 24 6" className="h-[6px] w-6" fill="#fff"><circle cx="3" cy="3" r="2.700" /><circle cx="12" cy="3" r="2.700" /><circle cx="21" cy="3" r="2.700" /></svg></button>
    <button aria-label="Raise hand" className={tb}><Hand className="size-[27px]" strokeWidth={1.500} /></button>
    <button aria-label="People" className={tb}><svg viewBox="0 0 28 26" className="h-[26px] w-7" fill="none" stroke="#fff" strokeWidth="1.500"><circle cx="9.500" cy="7" r="5" /><circle cx="21.500" cy="8" r="3.500" /><path d="M4 15H15Q17 15 17 17 17 24.500 9.500 24.500T2 17Q2 15 4 15ZM19.500 15H24.500Q26.500 15 26.500 17 26.500 22.500 20.500 22.500H18.500" /></svg></button>
    <div className="flex flex-1 items-center border-l border-[#252525] pl-[21px]"><button className="h-[39px] w-[175px] rounded border border-[#555] bg-[#202020] text-[16px] font-semibold">Request control</button></div>
    <button aria-label="Leave" className="grid w-[65px] place-items-center bg-[#9b2d42]"><svg viewBox="0 0 28 14" className="h-[14px] w-7"><path d="M1 9Q1 1 14 1T27 9Q27 12 25 12.500L20.500 12Q18.500 11.500 18.500 7.500 14 5.500 9.500 7.500 9.500 11.500 7.500 12L3 12.500Q1 12 1 9Z" fill="#fff" /></svg></button>
  </div>
);

const people: { id: string; name?: string; cut?: boolean; muted?: boolean; bg: string; av: string; live?: boolean }[] = [
  { id: 'NS', name: 'Nitesh Sharma (Guest)', muted: true, bg: 'bg-[#393939]', av: 'bg-[#fdeecb] text-[#7a5a0c]' },
  { id: 'SK', name: 'sandhya sonu khot (...', cut: true, muted: true, bg: 'bg-[#3a3a3a]', av: 'bg-[#daeff2] text-[#2f6d6d]' },
  { id: 'PP', muted: true, bg: 'bg-[#3e3e3e]', av: 'bg-[#fce9d8] text-[#8a5220]' },
  { id: 'VG', name: 'vadladi Gayathri (Gu...', cut: true, muted: true, bg: 'bg-[#383838]', av: 'bg-[#f6e8cd] text-[#7a4f0e]' },
  { id: 'RS', muted: true, bg: 'bg-[#3b3b3b]', av: 'bg-[#dce1d8] text-[#3c4c2c]' },
  { id: 'SD', muted: true, bg: 'bg-[#373737]', av: 'bg-[#daeff2] text-[#2f6d6d]' },
  { id: 'AA', muted: true, live: true, bg: 'bg-[radial-gradient(circle,#58588c_0%,#4a496c_28%,#3b3a48_75%)]', av: 'bg-[#ebd3e0] text-[#56173f]' },
  { id: 'BJ', live: true, bg: 'bg-[radial-gradient(circle,#58588c_0%,#4a496c_28%,#3b3a48_75%)]', av: 'bg-[#e5eddb] text-[#455f30]' },
];

const People = () => (
  <div className="flex h-[117px] shrink-0 text-white">
    <div className="grid w-[120px] place-items-center bg-[#1a1a1a] pl-[14px]"><span className="grid size-[53px] place-items-center rounded-full bg-[#c7d3ea] text-[19px] font-semibold text-[#0f2c63]">BY</span></div>
    {people.map((p) => (
      <div key={p.id} className={'relative grid flex-1 place-items-center ' + p.bg}>
        <span className={'grid size-[55px] place-items-center rounded-full text-[20px] font-semibold ' + p.av + (p.live ? ' ring-[3px] ring-[#9a9dff] ring-offset-4 ring-offset-[#2c2b3d]' : '')}>{p.id}</span>
        <div className="absolute bottom-0 left-[19px] flex h-[18px] items-center text-[14px] leading-[18px]">
          {p.name && <span className={'whitespace-nowrap ' + (p.cut ? 'w-[152px]' : '')}>{p.name}</span>}{p.muted && <MicOff className="ml-[8px] size-[18px]" />}
        </div>
      </div>
    ))}
  </div>
);

const app = 'flex h-[50px] w-[62px] items-center justify-center border-b-[3px] ';
const off = 'border-transparent';
const Taskbar = () => (
  <div className="flex h-[50px] shrink-0 items-center bg-[#222323] text-white">
    <button aria-label="Start" className="grid h-full w-[60px] place-items-center"><WinLogo className="size-5" /></button>
    <label className="flex h-full w-[430px] items-center border border-[#aaa] bg-[#f2f2f2] pl-[14px] text-[#222]"><Lens className="mr-[13px] size-[22px]" /><input aria-label="Type here to search" placeholder="Type here to search" className="w-[350px] text-[18px] outline-none placeholder:text-[#3a3a3a]" /></label>
    <div className={app + 'w-[60px] ' + off}><span className="size-[20px] rounded-full border-[3px] border-white" /></div>
    <div className={app + off}><TaskView className="size-5" /></div>
    <div className={app + off}><Edge className="size-[31px]" /></div>
    <div className={app + off}><svg viewBox="0 0 16 30" className="h-[30px] w-4" fill="#fff"><path d="M12 0Q0 8 1 12 2 14 9 17.500 7 23 5 30 16 21 14 16.500 13 13.500 7 11.500 7 7 12 0Z" /></svg></div>
    <div className={app + off}><Folder className="h-6 w-7" /></div>
    <div className={app + off}><svg viewBox="0 0 30 28" className="h-7 w-[30px]"><path d="M0 10 15 0 30 10V14H0Z" fill="#0b5cad" /><path d="M3 9H27V20H3Z" fill="#fff" /><path d="M0 10 15 20 30 10V28H0Z" fill="#2aa9ea" /><path d="M0 28 15 18 30 28Z" fill="#50c8f5" opacity=".6" /></svg></div>
    <div className={app + off}><svg viewBox="0 0 30 25" className="h-[25px] w-[30px]" fill="#fff"><path d="M7.500 0 15 4.700 7.500 9.400 0 4.700ZM22.500 0 30 4.700 22.500 9.400 15 4.700ZM7.500 9.600 15 14.300 7.500 19 0 14.300ZM22.500 9.600 30 14.300 22.500 19 15 14.300ZM15 15.500 22 20 15 25 8 20Z" /></svg></div>
    <div className={app + 'w-[51px] border-[#76b9ed]'}><Chrome letter="h" className="size-[31px]" /></div>
    <div className={app + off}><svg viewBox="0 0 26 28" className="h-7 w-[26px]"><path d="M4 21H22L26 28H0Z" fill="#f58a12" /><path d="M11 0H15L21 23H5Z" fill="#f58a12" /><path d="M9.700 5H16.300L17.600 10H8.400ZM7.300 14H18.700L20 19H6Z" fill="#eee" /></svg></div>
    <div className={app + 'w-[51px] border-[#76b9ed]'}><Chrome letter="H" className="size-[31px]" /></div>
    <div className={app + 'border-[#76b9ed] bg-[#4a4b4b]'}><TeamsLogo className="h-7 w-[30px]" /></div>
    <svg viewBox="0 0 28 28" className="ml-[82px] size-7"><circle cx="14" cy="14" r="13" fill="#1a8fd8" stroke="#fff" strokeWidth="2" /><text x="13" y="21" fontSize="19" fontWeight="700" textAnchor="middle" fill="#fff" fontFamily="Open Sans, sans-serif">?</text><circle cx="23" cy="22" r="5" fill="#f5a81c" /><path d="M23 19V20M23 21.500V25" stroke="#fff" strokeWidth="1.500" /></svg>
    <div className="ml-auto flex h-full items-center text-[15px]">
      <svg viewBox="0 0 28 24" className="h-6 w-7"><circle cx="14" cy="11" r="11" fill="#fcb92c" /><path d="M0 18H28M5 14Q8 9 13 12 20 8 22 14Q27 15 26 17 24 20 12 20 1 20 3 17Q2 15 5 14Z" fill="#d9c4a4" /></svg>
      <span className="ml-[11px] text-[16px] whitespace-nowrap">34°C&nbsp; Haze</span>
      <ChevronUp className="ml-[18px] size-5" strokeWidth={1.500} /><CamTray className="ml-[12px] h-5 w-[18px]" />
      <svg viewBox="0 0 14 20" className="ml-[14px] h-5 w-[14px]" stroke="#fff" fill="none"><rect x="3.500" y="0" width="7" height="13" rx="2" fill="#fff" /><path d="M1 9V13Q1 15.500 7 15.500T13 13V9M7 15.500V19M3 19.500H11" /></svg>
      <Battery className="ml-[14px] h-[14px] w-[21px]" /><Wifi className="ml-[11px] size-[18px]" /><Volume2 className="ml-[9px] size-5" strokeWidth={1.300} />
      <span className="ml-[13px] w-[46px]">ENG</span>
      <span className="w-[78px] text-center text-[14px] leading-[23px]">09:47<br />14-03-2022</span>
      <span className="relative ml-[20px]"><Notice className="size-5" /><span className="absolute top-2 left-[9px] grid size-[20px] place-items-center rounded-full border border-[#999] bg-[#333] text-[12px]">2</span></span>
      <span className="mr-[5px] ml-[25px] h-full w-px bg-[#777]" />
    </div>
  </div>
);

export default function App() {
  return (
    <div className="flex h-screen flex-col overflow-hidden bg-black font-['Open_Sans',sans-serif]">
      <header className="flex h-[60px] shrink-0 items-center justify-end bg-[#0a0a0a] text-white">
        <button aria-label="Minimise" className="mr-[37px]"><Minus className="size-[18px]" strokeWidth={1.500} /></button>
        <button aria-label="Restore" className="mr-[36px]"><svg viewBox="0 0 18 18" className="size-[18px]" fill="none" stroke="#fff" strokeWidth="1.500"><path d="M1 4H14V17H1ZM4 4V1H17V14H14" /></svg></button>
        <button aria-label="Close" className="mr-[17px]"><X className="size-5" strokeWidth={1.300} /></button>
      </header>
      <div className="flex h-[60px] shrink-0 items-center bg-[#30385f] pt-px pr-10 pl-80 font-['Noto_Sans',sans-serif] text-[16px] text-white">
        <svg viewBox="0 0 20 18" className="mr-[10px] h-[18px] w-5"><path d="M10 0 20 17.500H0Z" fill="#fff" strokeLinejoin="round" /><path d="M10 6V12M10 13.500V15.500" stroke="#30385f" strokeWidth="1.600" /></svg>
        <p><b>Recording has started.</b> This meeting is being recorded. By joining, you are giving consent for this meeting to be recorded. <a href="#privacy" className="underline">Privacy policy</a></p>
        <button className="ml-auto h-10 w-[135px] rounded border border-[#6a7196] font-semibold">Dismiss</button>
      </div>

      <main className="relative flex min-h-0 flex-1">
        <div className="flex w-64 shrink-0 items-end pb-[22px] pl-10 text-[14px] text-white">bimal jain (Guest)</div>
        <div className="flex min-w-0 flex-1 flex-col bg-[#e6e6e8]">
          <TitleBar />
          <nav className="flex h-6 shrink-0 items-start bg-[#f4f1f0] pl-[13px] text-[9px] leading-[20px] text-[#444]">
            {tabs.map(([t, w]) => <button key={t} className={'h-6 text-left whitespace-nowrap ' + w}><span className={t === 'Home' ? 'inline-block h-[20px] border-b-2 border-[#c25029] text-[#222]' : 'inline-block h-[20px]'}>{t}</span></button>)}
            <button className="mt-[3px] mr-[10px] ml-auto flex h-4 w-12 items-center justify-center gap-[3px] bg-white text-[#c25029] shadow-sm">
              <svg viewBox="0 0 9 9" className="size-[9px]" fill="none" stroke="currentColor"><path d="M3 3H.5V8.500H7.500V6M2.500 6Q3 3 6 3V.8L8.500 3.500 6 6V4.500Q4 4.500 2.500 6Z" /></svg>Share
            </button>
          </nav>
          <Ribbon />
          <div className="flex min-h-0 flex-1">
            <ol className="flex w-[213px] shrink-0 flex-col gap-4 overflow-hidden pt-[10px]">{thumbs.map((t) => <Thumb key={t.n} t={t} />)}</ol>
            <div className="flex w-[11px] flex-col bg-[#dadada] pt-[2px]"><Arrow /><div className="flex-1 pt-[146px]"><div className="h-[79px] border border-[#bbb] bg-white" /></div><Arrow down /></div>
            <div className="ml-[3px] flex min-w-0 flex-1 border-l border-[#cfcfd1] pt-[14px] pb-[16px] pl-[51px]">
              <div className={'flex min-w-0 flex-1 flex-col overflow-hidden pt-[53px] ' + slideBg}>
                <div className="flex h-[120px] shrink-0 gap-[14px] text-white">
                  <h1 className="flex flex-1 items-center bg-[#262626] pb-1 pl-[68px] text-[38px] font-medium shadow-[-14px_10px_8px_-2px_#0006]"><span className="mr-[12px] leading-[34px] underline decoration-[#d23c3c] decoration-wavy decoration-1 underline-offset-4">Git</span>commands</h1>
                  <div className="flex w-[141px] items-center bg-[#fb9612] pl-[22px] text-[36px] font-medium shadow-[4px_6px_5px_-1px_#0006]">15</div>
                </div>
                <div className="relative mt-[5px] ml-[29px] font-['Noto_Sans',sans-serif]"><CommandTable /></div>
              </div>
            </div>
            <div className="mr-px ml-[51px] flex w-[11px] flex-col bg-[#dadada] pt-[2px] pb-4"><Arrow /><div className="flex-1 pt-[187px]"><div className="h-[13px] border border-[#bbb] bg-white" /></div><Arrow down />
              <svg viewBox="0 0 10 28" className="mx-auto h-7 w-[10px] shrink-0" fill="#666"><path d="M2 8 5 5 8 8ZM2 11 5 8 8 11ZM2 18 5 21 8 18ZM2 21 5 24 8 21Z" /></svg>
            </div>
          </div>
          <StatusBar />
          <InnerTaskbar />
        </div>
        <div className="w-[255px] shrink-0" />
        <CallBar />
      </main>
      <People />
      <Taskbar />
    </div>
  );
}
